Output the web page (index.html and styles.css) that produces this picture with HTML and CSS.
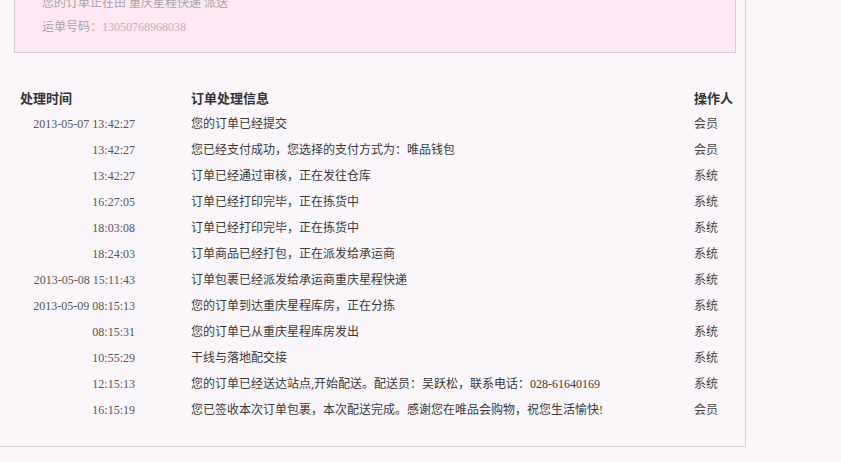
FILE: index.html
```html
<!DOCTYPE html>
<html lang="zh-CN">
<head>
<meta charset="utf-8">
<title>订单跟踪</title>
<link rel="stylesheet" href="styles.css">
</head>
<body>
<div class="wrap">
  <div class="ship">
    <p class="ship-line">您的订单正在由 重庆星程快递 派送</p>
    <p class="ship-line">运单号码：<span class="ship-no">13050768968038</span></p>
  </div>
  <div class="log">
    <div class="row head">
      <div class="c-time">处理时间</div>
      <div class="c-info">订单处理信息</div>
      <div class="c-op">操作人</div>
    </div>
    <div class="row"><div class="c-time">2013-05-07 13:42:27</div><div class="c-info">您的订单已经提交</div><div class="c-op">会员</div></div>
    <div class="row"><div class="c-time">13:42:27</div><div class="c-info">您已经支付成功，您选择的支付方式为：唯品钱包</div><div class="c-op">会员</div></div>
    <div class="row"><div class="c-time">13:42:27</div><div class="c-info">订单已经通过审核，正在发往仓库</div><div class="c-op">系统</div></div>
    <div class="row"><div class="c-time">16:27:05</div><div class="c-info">订单已经打印完毕，正在拣货中</div><div class="c-op">系统</div></div>
    <div class="row"><div class="c-time">18:03:08</div><div class="c-info">订单已经打印完毕，正在拣货中</div><div class="c-op">系统</div></div>
    <div class="row"><div class="c-time">18:24:03</div><div class="c-info">订单商品已经打包，正在派发给承运商</div><div class="c-op">系统</div></div>
    <div class="row"><div class="c-time">2013-05-08 15:11:43</div><div class="c-info">订单包裹已经派发给承运商重庆星程快递</div><div class="c-op">系统</div></div>
    <div class="row"><div class="c-time">2013-05-09 08:15:13</div><div class="c-info">您的订单到达重庆星程库房，正在分拣</div><div class="c-op">系统</div></div>
    <div class="row"><div class="c-time">08:15:31</div><div class="c-info">您的订单已从重庆星程库房发出</div><div class="c-op">系统</div></div>
    <div class="row"><div class="c-time">10:55:29</div><div class="c-info">干线与落地配交接</div><div class="c-op">系统</div></div>
    <div class="row"><div class="c-time">12:15:13</div><div class="c-info">您的订单已经送达站点,开始配送。配送员：吴跃松，联系电话：028-61640169</div><div class="c-op">系统</div></div>
    <div class="row"><div class="c-time">16:15:19</div><div class="c-info">您已签收本次订单包裹，本次配送完成。感谢您在唯品会购物，祝您生活愉快!</div><div class="c-op">会员</div></div>
  </div>
</div>
</body>
</html>
```

FILE: styles.css
```css
html, body {
  margin: 0;
  padding: 0;
  background: #faf6fa;
  overflow: hidden;
}
body {
  font-family: "Liberation Serif", "Noto Sans CJK SC", serif;
  font-size: 12px;
  color: #444;
}
.wrap {
  width: 745px;
  height: 446px;
  border-right: 1px solid #dccfd8;
  border-bottom: 1px solid #dccfd8;
  overflow: hidden;
}
.ship {
  margin: -19px 0 0 14px;
  width: 720px;
  padding: 10px 0 13px 27px;
  box-sizing: border-box;
  width: 722px;
  background: #fde8f3;
  border: 1px solid #d8ccd3;
  border-top: none;
}
.ship-line {
  margin: 0;
  line-height: 24px;
  color: #aaa3aa;
}
.ship-no {
  color: #c2aebb;
}
.log {
  margin-top: 32px;
  padding-left: 20px;
}
.row {
  display: grid;
  grid-template-columns: 115px 559px 1fr;
  height: 26px;
  line-height: 26px;
  white-space: nowrap;
}
.c-time {
  text-align: right;
  color: #555;
}
.c-info {
  padding-left: 56px;
  color: #3a3a3a;
}
.c-op {
  color: #444;
}
.head {
  font-family: "Noto Sans CJK SC", sans-serif;
  font-size: 13px;
  font-weight: bold;
  color: #333;
}
.head .c-time {
  text-align: left;
  color: #333;
}
.head .c-info,
.head .c-op {
  color: #333;
}
```
